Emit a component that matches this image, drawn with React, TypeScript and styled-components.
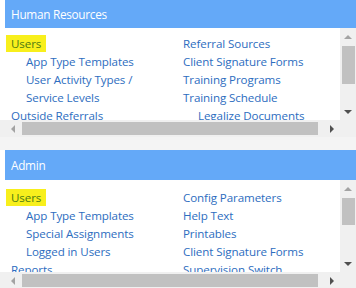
import React from "react";
import styled, { createGlobalStyle } from "styled-components";

const Global = createGlobalStyle`
  html, body { margin: 0; padding: 0; background: #f4f4f4; overflow: hidden; }
  body { font-family: "Open Sans", "Noto Sans", sans-serif; }
`;

const Page = styled.div`
  width: 356px;
  height: 288px;
  overflow: hidden;
  display: flex;
  flex-direction: column;
  gap: 13px;
  background: #f4f4f4;
`;

const Panel = styled.section`
  flex: none;
  display: grid;
  grid-template-columns: 1fr 16px;
  grid-template-rows: auto 92px 17px;
  background: #ffffff;
`;

const Header = styled.div<{ $h: number }>`
  grid-column: 1 / -1;
  margin-left: 5px;
  height: ${(p) => p.$h}px;
  background: #64a9f8;
  color: #ffffff;
  font-size: 11.8px;
  letter-spacing: -0.3px;
  display: flex;
  align-items: center;
  padding-left: 6px;
`;

const Viewport = styled.div<{ $top: number }>`
  overflow: hidden;
  display: grid;
  grid-template-columns: 178px 1fr;
  padding-top: ${(p) => p.$top}px;
  font-size: 11.6px;
  letter-spacing: -0.1px;
`;

const Column = styled.ul<{ $left: number }>`
  list-style: none;
  margin: 0;
  padding: 0 0 0 ${(p) => p.$left}px;
  display: flex;
  flex-direction: column;
  align-items: flex-start;
`;

const Item = styled.li<{ $indent?: boolean }>`
  line-height: 18px;
  white-space: nowrap;
  color: #2d6dc0;
  padding-left: ${(p) => (p.$indent ? 15 : 0)}px;
`;

const Current = styled.li`
  line-height: 17px;
  white-space: nowrap;
  color: #4c7a12;
  background: #f8ef1c;
  margin: 0 0 1px -5px;
  padding: 0 5px;
`;

const VScroll = styled.div`
  background: #f0f0f0;
  display: flex;
  flex-direction: column;
`;

const ArrowBox = styled.div`
  flex: none;
  width: 16px;
  height: 17px;
  display: flex;
  align-items: center;
  justify-content: center;
`;

const Tri = styled.span<{ $dir: "up" | "down" | "left" | "right"; $dark?: boolean }>`
  width: 0;
  height: 0;
  border-style: solid;
  ${(p) => {
    const c = p.$dark ? "#505050" : "#a3a3a3";
    switch (p.$dir) {
      case "up":
        return `border-width: 0 4px 4px 4px; border-color: transparent transparent ${c} transparent;`;
      case "down":
        return `border-width: 4px 4px 0 4px; border-color: ${c} transparent transparent transparent;`;
      case "left":
        return `border-width: 4px 4px 4px 0; border-color: transparent ${c} transparent transparent;`;
      default:
        return `border-width: 4px 0 4px 4px; border-color: transparent transparent transparent ${c};`;
    }
  }}
`;

const VTrack = styled.div`
  flex: 1;
  display: flex;
  flex-direction: column;
  padding: 0 1px 0 2px;
`;

const VThumb = styled.div<{ $h: number }>`
  margin-top: 1px;
  height: ${(p) => p.$h}px;
  background: #c1c1c1;
`;

const HScroll = styled.div`
  background: #f0f0f0;
  display: flex;
  align-items: center;
  padding-left: 5px;
`;

const HTrack = styled.div`
  flex: 1;
  align-self: stretch;
  display: flex;
  align-items: center;
  padding-left: 1px;
`;

const HThumb = styled.div<{ $w: number }>`
  height: 13px;
  width: ${(p) => p.$w}px;
  background: #c1c1c1;
`;

const Corner = styled.div`
  background: #f0f0f0;
`;

type Entry = { label: React.ReactNode; indent?: boolean; current?: boolean };

type PanelDef = {
  title: string;
  headerH: number;
  top: number;
  thumb: number;
  left: Entry[];
  right: Entry[];
};

const panels: PanelDef[] = [
  {
    title: "Human Resources",
    headerH: 28,
    top: 7,
    thumb: 38,
    left: [
      { label: "Users", current: true },
      { label: "App Type Templates", indent: true },
      {
        label: (
          <>
            User Activity Types /<br />
            Service Levels
          </>
        ),
        indent: true,
      },
      { label: "Outside Referrals" },
    ],
    right: [
      { label: "Referral Sources" },
      { label: "Client Signature Forms" },
      { label: "Training Programs" },
      { label: "Training Schedule" },
      { label: "Legalize Documents", indent: true },
    ],
  },
  {
    title: "Admin",
    headerH: 30,
    top: 9,
    thumb: 27,
    left: [
      { label: "Users", current: true },
      { label: "App Type Templates", indent: true },
      { label: "Special Assignments", indent: true },
      { label: "Logged in Users", indent: true },
      { label: "Reports" },
    ],
    right: [
      { label: "Config Parameters" },
      { label: "Help Text" },
      { label: "Printables" },
      { label: "Client Signature Forms" },
      { label: "Supervision Switch" },
    ],
  },
];

function renderEntries(list: Entry[]) {
  return list.map((e, i) =>
    e.current ? (
      <Current key={i}>{e.label}</Current>
    ) : (
      <Item key={i} $indent={e.indent}>
        {e.label}
      </Item>
    )
  );
}

function MenuPanel({ def }: { def: PanelDef }) {
  return (
    <Panel>
      <Header $h={def.headerH}>{def.title}</Header>
      <Viewport $top={def.top}>
        <Column $left={11}>{renderEntries(def.left)}</Column>
        <Column $left={5}>{renderEntries(def.right)}</Column>
      </Viewport>
      <VScroll>
        <ArrowBox>
          <Tri $dir="up" />
        </ArrowBox>
        <VTrack>
          <VThumb $h={def.thumb} />
        </VTrack>
        <ArrowBox>
          <Tri $dir="down" $dark />
        </ArrowBox>
      </VScroll>
      <HScroll>
        <ArrowBox>
          <Tri $dir="left" />
        </ArrowBox>
        <HTrack>
          <HThumb $w={296} />
        </HTrack>
        <ArrowBox>
          <Tri $dir="right" $dark />
        </ArrowBox>
      </HScroll>
      <Corner />
    </Panel>
  );
}

export default function App() {
  return (
    <>
      <Global />
      <Page>
        {panels.map((p) => (
          <MenuPanel key={p.title} def={p} />
        ))}
      </Page>
    </>
  );
}
